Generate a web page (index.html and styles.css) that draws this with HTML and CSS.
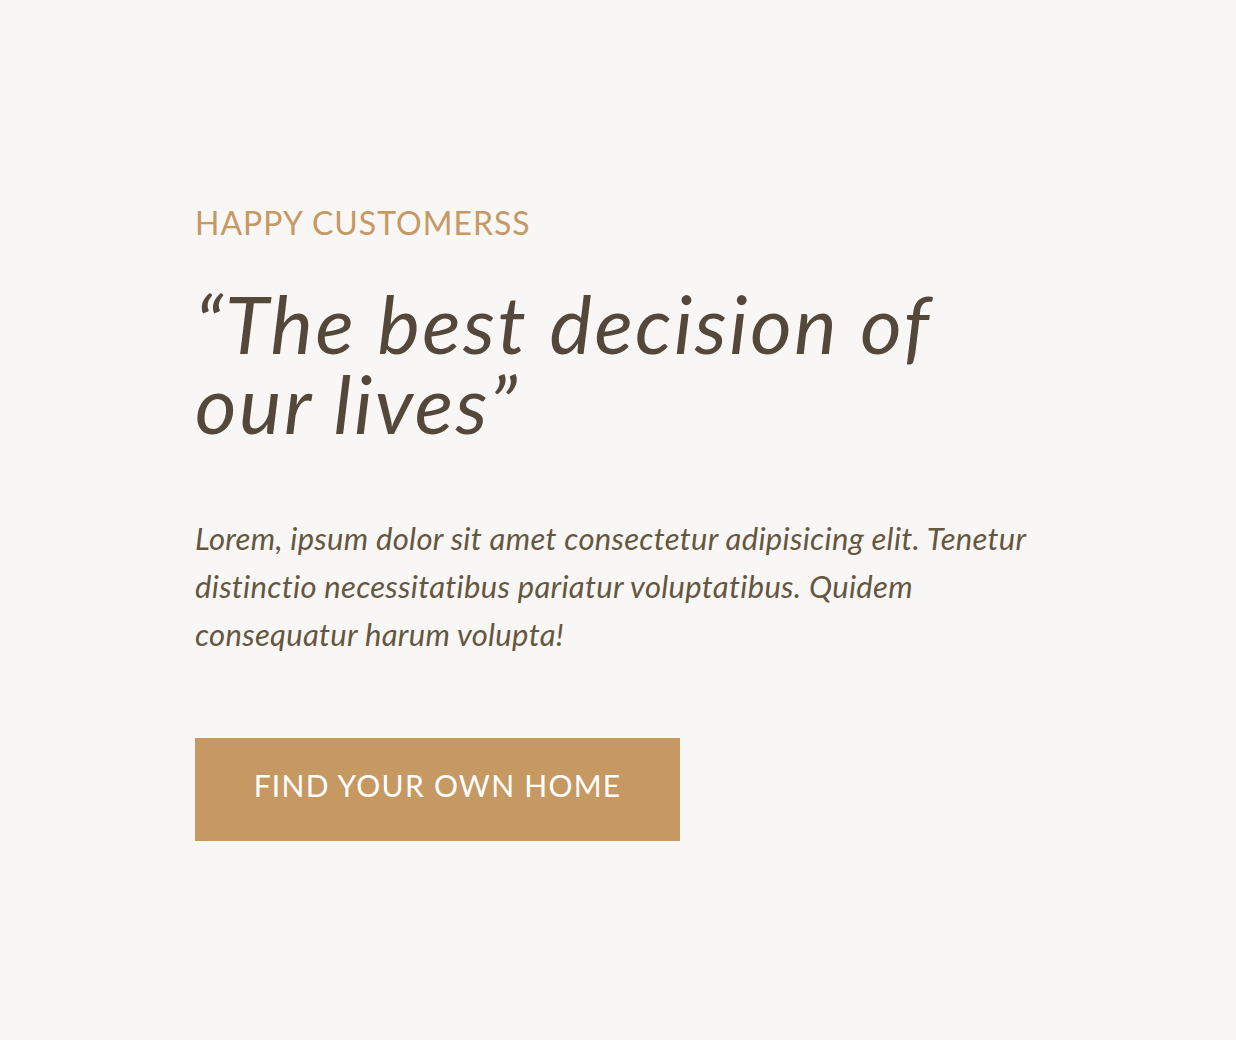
FILE: index.html
```html
<!DOCTYPE html>
<html lang="en">
<head>
<meta charset="utf-8">
<title>Happy Customers</title>
<link rel="stylesheet" href="styles.css">
</head>
<body>
<section class="story">
  <h3 class="story__sub">Happy Customerss</h3>
  <h2 class="story__title">&ldquo;The best decision of our lives&rdquo;</h2>
  <p class="story__text">Lorem, ipsum dolor sit amet consectetur adipisicing elit. Tenetur distinctio necessitatibus pariatur voluptatibus. Quidem consequatur harum volupta!</p>
  <a class="btn" href="#">Find your own home</a>
</section>
</body>
</html>
```
FILE: styles.css
```css
html, body {
  margin: 0;
  padding: 0;
}
body {
  background: #f9f7f6;
  min-height: 1040px;
  font-family: Lato, "Noto Sans", sans-serif;
  color: #54483a;
}
.story {
  padding: 207px 195px 0 195px;
  display: flex;
  flex-direction: column;
  align-items: flex-start;
}
.story__sub {
  margin: 0;
  font-size: 32px;
  line-height: 32px;
  font-weight: 400;
  text-transform: uppercase;
  color: #c69963;
  letter-spacing: 1px;
}
.story__title {
  margin: 44px 0 0 0;
  font-size: 80px;
  line-height: 80px;
  font-weight: 400;
  font-style: italic;
  max-width: 800px;
  letter-spacing: 2.5px;
}
.story__text {
  margin: 71px 0 0 0;
  font-size: 31px;
  line-height: 48px;
  font-style: italic;
  max-width: 850px;
  letter-spacing: 0.3px;
  color: #65563f;
}
.btn {
  margin-top: 80px;
  display: flex;
  align-items: center;
  justify-content: center;
  box-sizing: border-box;
  width: 485px;
  height: 103px;
  padding-bottom: 10px;
  background: #c69963;
  color: #fff;
  text-decoration: none;
  text-transform: uppercase;
  font-size: 30px;
  letter-spacing: 1.25px;
}
```
